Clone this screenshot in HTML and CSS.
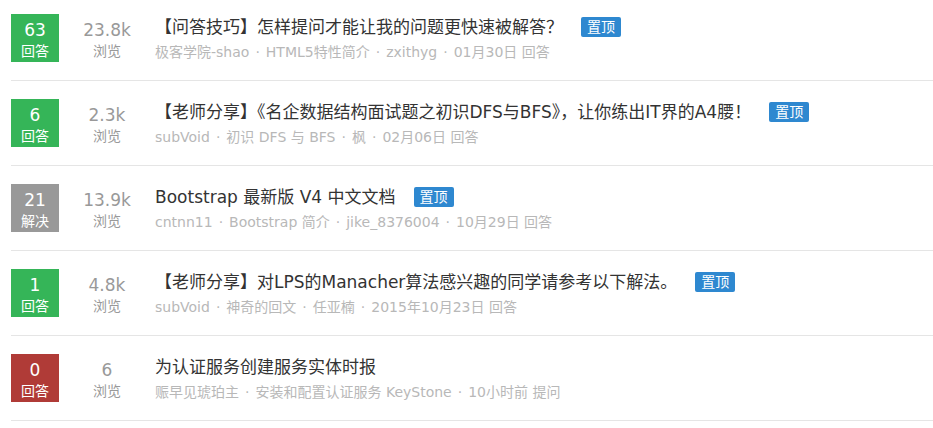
FILE: index.html
```html
<!DOCTYPE html>
<html lang="zh-CN">
<head>
<meta charset="utf-8">
<title>问答列表</title>
<link rel="stylesheet" href="styles.css">
</head>
<body>
<ul class="list">
  <li class="item">
    <div class="badge badge-green"><span class="badge-num">63</span><span class="badge-label">回答</span></div>
    <div class="views"><span class="views-num">23.8k</span><span class="views-label">浏览</span></div>
    <div class="content">
      <div class="title"><span class="title-text">【问答技巧】怎样提问才能让我的问题更快速被解答？</span><span class="tag">置顶</span></div>
      <div class="meta">极客学院-shao<span class="sep">·</span>HTML5特性简介<span class="sep">·</span>zxithyg<span class="sep">·</span>01月30日 回答</div>
    </div>
  </li>
  <li class="item">
    <div class="badge badge-green"><span class="badge-num">6</span><span class="badge-label">回答</span></div>
    <div class="views"><span class="views-num">2.3k</span><span class="views-label">浏览</span></div>
    <div class="content">
      <div class="title"><span class="title-text">【老师分享】《名企数据结构面试题之初识DFS与BFS》，让你练出IT界的A4腰！</span><span class="tag">置顶</span></div>
      <div class="meta">subVoid<span class="sep">·</span>初识 DFS 与 BFS<span class="sep">·</span>枫<span class="sep">·</span>02月06日 回答</div>
    </div>
  </li>
  <li class="item">
    <div class="badge badge-gray"><span class="badge-num">21</span><span class="badge-label">解决</span></div>
    <div class="views"><span class="views-num">13.9k</span><span class="views-label">浏览</span></div>
    <div class="content">
      <div class="title"><span class="title-text">Bootstrap 最新版 V4 中文文档</span><span class="tag">置顶</span></div>
      <div class="meta">cntnn11<span class="sep">·</span>Bootstrap 简介<span class="sep">·</span>jike_8376004<span class="sep">·</span>10月29日 回答</div>
    </div>
  </li>
  <li class="item">
    <div class="badge badge-green"><span class="badge-num">1</span><span class="badge-label">回答</span></div>
    <div class="views"><span class="views-num">4.8k</span><span class="views-label">浏览</span></div>
    <div class="content">
      <div class="title"><span class="title-text">【老师分享】对LPS的Manacher算法感兴趣的同学请参考以下解法。</span><span class="tag">置顶</span></div>
      <div class="meta">subVoid<span class="sep">·</span>神奇的回文<span class="sep">·</span>任亚楠<span class="sep">·</span>2015年10月23日 回答</div>
    </div>
  </li>
  <li class="item">
    <div class="badge badge-red"><span class="badge-num">0</span><span class="badge-label">回答</span></div>
    <div class="views"><span class="views-num">6</span><span class="views-label">浏览</span></div>
    <div class="content">
      <div class="title"><span class="title-text">为认证服务创建服务实体时报</span></div>
      <div class="meta">赈早见琥珀主<span class="sep">·</span>安装和配置认证服务 KeyStone<span class="sep">·</span>10小时前 提问</div>
    </div>
  </li>
</ul>
</body>
</html>
```
FILE: styles.css
```css
html, body {
  margin: 0;
  padding: 0;
  background: #fff;
}
body {
  font-family: "DejaVu Sans", "Noto Sans CJK SC", sans-serif;
  overflow: hidden;
}
.list {
  list-style: none;
  margin: -4px 0 0 0;
  padding: 0 0 0 11px;
}
.item {
  display: flex;
  align-items: flex-start;
  height: 48px;
  padding: 18px 0;
  border-bottom: 1px solid #e5e5e5;
}
.badge {
  width: 48px;
  height: 48px;
  flex: none;
  display: flex;
  flex-direction: column;
  align-items: center;
  box-sizing: border-box;
  padding-top: 5px;
  color: #fff;
}
.badge-green { background: #35b558; }
.badge-gray { background: #999999; }
.badge-red { background: #b03b37; }
.badge-num {
  font-size: 17px;
  line-height: 22px;
}
.badge-label {
  font-size: 14px;
  line-height: 20px;
}
.views {
  width: 96px;
  flex: none;
  display: flex;
  flex-direction: column;
  align-items: center;
  padding-top: 5px;
  color: #999;
}
.views-num {
  font-size: 17px;
  line-height: 22px;
}
.views-label {
  font-size: 14px;
  line-height: 20px;
}
.content {
  display: flex;
  flex-direction: column;
  white-space: nowrap;
}
.title {
  display: flex;
  align-items: center;
  height: 24px;
  margin-top: 1px;
}
.title-text {
  font-size: 17px;
  line-height: 24px;
  color: #333;
}
.tag {
  margin-left: 18px;
  background: #2e88d0;
  color: #fff;
  font-size: 14px;
  line-height: 20px;
  height: 20px;
  padding: 0 6px;
  border-radius: 2px;
}
.meta {
  margin-top: 3px;
  font-size: 14px;
  line-height: 20px;
  color: #b8b8b8;
}
.sep {
  margin: 0 6px;
}
```
